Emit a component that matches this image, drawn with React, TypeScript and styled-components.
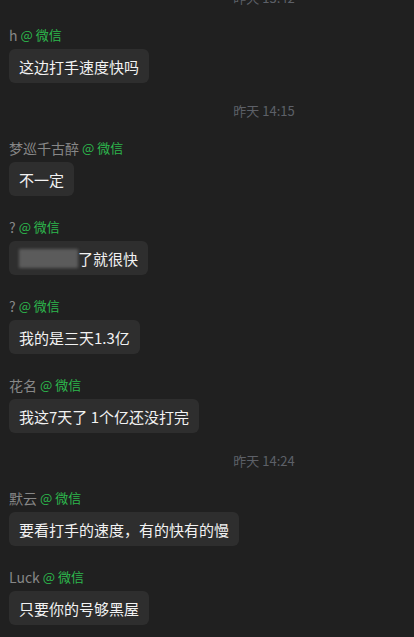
import { FC } from "react";
import styled, { createGlobalStyle } from "styled-components";

type Item =
  | { kind: "time"; text: string }
  | { kind: "msg"; name: string; text: string; masked?: boolean };

const items: Item[] = [
  { kind: "time", text: "昨天 13:42" },
  { kind: "msg", name: "h", text: "这边打手速度快吗" },
  { kind: "time", text: "昨天 14:15" },
  { kind: "msg", name: "梦巡千古醉", text: "不一定" },
  { kind: "msg", name: "?", text: "了就很快", masked: true },
  { kind: "msg", name: "?", text: "我的是三天1.3亿" },
  { kind: "msg", name: "花名", text: "我这7天了 1个亿还没打完" },
  { kind: "time", text: "昨天 14:24" },
  { kind: "msg", name: "默云", text: "要看打手的速度，有的快有的慢" },
  { kind: "msg", name: "Luck", text: "只要你的号够黑屋" },
];

const GlobalStyle = createGlobalStyle`
  html, body {
    margin: 0;
    padding: 0;
    background: #202020;
    overflow: hidden;
  }
  body {
    font-family: "Microsoft YaHei", "Noto Sans CJK SC", "Noto Sans", sans-serif;
  }
`;

const ChatMessage: FC<{ name: string; text: string; masked?: boolean }> = ({
  name,
  text,
  masked,
}) => (
  <Message>
    <NameLine>
      <Name>{name}</Name>
      <Source>@ 微信</Source>
    </NameLine>
    <Bubble>
      {masked && <Mask />}
      {text}
    </Bubble>
  </Message>
);

export default function App() {
  return (
    <Page>
      <GlobalStyle />
      <List>
        {items.map((item, i) =>
          item.kind === "time" ? (
            <TimeStamp key={i}>{item.text}</TimeStamp>
          ) : (
            <ChatMessage key={i} name={item.name} text={item.text} masked={item.masked} />
          )
        )}
      </List>
    </Page>
  );
}

const Page = styled.div`
  width: 414px;
  height: 637px;
  background: #202020;
  overflow: hidden;
`;

const List = styled.div`
  display: flex;
  flex-direction: column;
  gap: 22px;
  padding: 0 9px;
  margin-top: -8px;
`;

const TimeStamp = styled.div`
  height: 12px;
  line-height: 12px;
  font-size: 13px;
  color: #5d6068;
  text-align: center;
  padding-left: 114px;
`;

const Message = styled.div`
  display: flex;
  flex-direction: column;
  align-items: flex-start;
  gap: 5px;
`;

const NameLine = styled.div`
  display: flex;
  align-items: center;
  gap: 3px;
  height: 18px;
  line-height: 18px;
`;

const Name = styled.span`
  color: #878787;
  font-size: 14px;
`;

const Source = styled.span`
  color: #2db84d;
  font-size: 13px;
`;

const Bubble = styled.div`
  display: flex;
  align-items: center;
  height: 34px;
  padding: 0 10px;
  background: #2e2e2e;
  border-radius: 6px;
  color: #f2f2f2;
  font-size: 15px;
`;

const Mask = styled.span`
  display: inline-block;
  width: 59px;
  height: 19px;
  background: #5b5b5b;
  filter: blur(1.5px);
`;
